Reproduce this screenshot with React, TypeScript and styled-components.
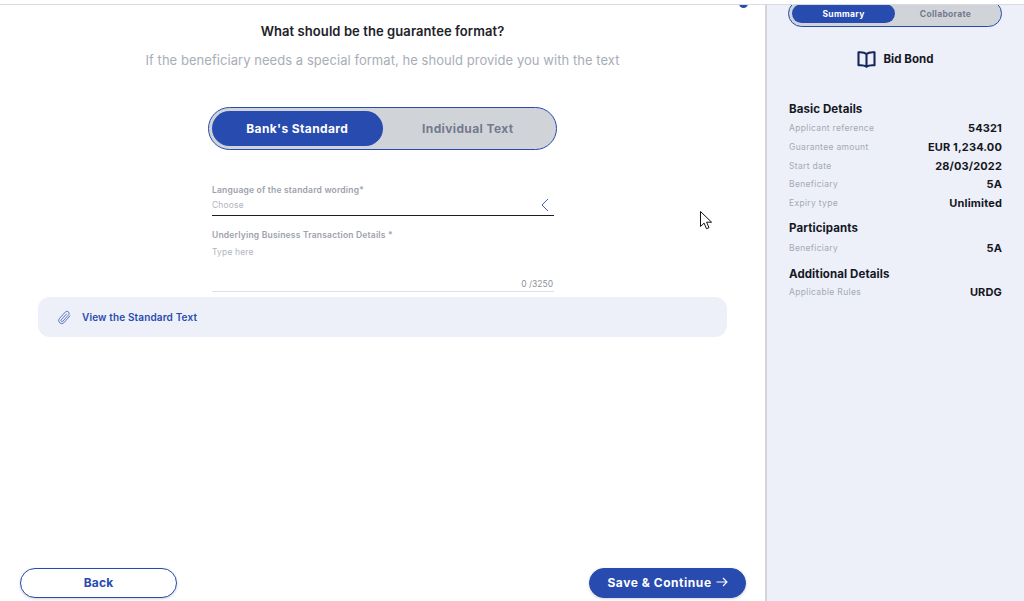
import React from "react";
import styled, { createGlobalStyle } from "styled-components";

const Global = createGlobalStyle`
  html, body { margin: 0; padding: 0; background: #fff; }
  #root { width: 1024px; height: 601px; overflow: hidden; }
  * { box-sizing: border-box; }
  body { font-family: "Inter", "Liberation Sans", sans-serif; }
`;

const Page = styled.div`
  position: relative;
  width: 1024px;
  height: 601px;
  display: flex;
  overflow: hidden;
  background: #fff;
`;

const TopBand = styled.div`
  position: absolute;
  left: 0;
  right: 0;
  top: 0;
  height: 5px;
  background: #fff;
  border-bottom: 1px solid #d9dadd;
  z-index: 3;
`;

const Main = styled.main`
  position: relative;
  width: 765px;
  flex: none;
  height: 601px;
  display: flex;
  flex-direction: column;
  align-items: center;
  padding: 23px 0 3px;
`;

const StepDot = styled.span`
  position: absolute;
  top: -1px;
  left: 739px;
  width: 9px;
  height: 9px;
  border-radius: 50%;
  border: 3px solid #274baf;
  background: #8fa3d8;
`;

const Title = styled.h1`
  margin: 0;
  width: 765px;
  text-align: center;
  font-size: 13px;
  line-height: 16px;
  letter-spacing: 0.08px;
  font-weight: 600;
  color: #1d2129;
`;

const Subtitle = styled.p`
  margin: 12px 0 0;
  font-size: 13px;
  line-height: 18px;
  letter-spacing: 0.05px;
  font-weight: 400;
  color: #a9adb8;
`;

const Switch = styled.div<{ $compact?: boolean }>`
  display: flex;
  align-items: center;
  flex: none;
  background: #d0d4d9;
  border: 1px solid #274baf;
  border-radius: 22px;
  padding: 3px;
  width: ${(p) => (p.$compact ? "214px" : "349px")};
  height: ${(p) => (p.$compact ? "27px" : "43px")};
  margin-top: ${(p) => (p.$compact ? "0" : "38px")};
  margin-left: ${(p) => (p.$compact ? "-1px" : "0")};
`;

const SwitchOption = styled.div<{ $on?: boolean; $compact?: boolean }>`
  height: 100%;
  display: flex;
  align-items: center;
  justify-content: center;
  border-radius: 18px;
  width: ${(p) => (p.$compact ? (p.$on ? "103px" : "101px") : "171px")};
  font-size: ${(p) => (p.$compact ? "8.5px" : "12px")};
  letter-spacing: ${(p) => (p.$compact ? "0.3px" : "0.38px")};
  font-weight: 700;
  background: ${(p) => (p.$on ? "#274baf" : "transparent")};
  color: ${(p) => (p.$on ? "#fff" : "#747a8c")};
`;

const Form = styled.div`
  width: 343px;
  margin-top: 34px;
  padding-left: 1px;
  display: flex;
  flex-direction: column;
`;

const FieldLabel = styled.label`
  font-size: 8.5px;
  line-height: 12px;
  letter-spacing: 0.2px;
  font-weight: 600;
  color: #9da1ac;
`;

const SelectRow = styled.div`
  display: flex;
  align-items: center;
  justify-content: space-between;
  height: 19px;
  padding: 0 5px 2px 0;
  border-bottom: 1px solid #1b1d22;
  margin-top: 1px;
  margin-bottom: 13px;
`;

const Placeholder = styled.span`
  font-size: 8.5px;
  line-height: 12px;
  letter-spacing: 0.15px;
  color: #b2b5bd;
`;

const TextArea = styled.div`
  display: flex;
  flex-direction: column;
  height: 51px;
  border-bottom: 1px solid #dfe1e4;
  padding-top: 5px;
`;

const Counter = styled.span`
  margin-top: auto;
  margin-bottom: 1px;
  padding-right: 1px;
  text-align: right;
  font-size: 8.5px;
  line-height: 12px;
  color: #8f939d;
`;

const AttachPanel = styled.div`
  align-self: flex-start;
  margin: 5px 0 0 38px;
  width: 689px;
  height: 40px;
  border-radius: 12px;
  background: #edf0f8;
  display: flex;
  align-items: center;
  gap: 10px;
  padding-left: 19px;
`;

const AttachLink = styled.a`
  font-size: 10px;
  letter-spacing: 0.14px;
  font-weight: 600;
  color: #274baf;
`;

const Footer = styled.div`
  margin-top: auto;
  width: 765px;
  display: flex;
  justify-content: space-between;
  padding: 0 19px 0 20px;
`;

const Button = styled.button<{ $primary?: boolean }>`
  width: 157px;
  height: 30px;
  border-radius: 15px;
  border: 1px solid #274baf;
  background: ${(p) => (p.$primary ? "#274baf" : "#fff")};
  color: ${(p) => (p.$primary ? "#fff" : "#274baf")};
  font-family: inherit;
  font-size: 12px;
  letter-spacing: ${(p) => (p.$primary ? "0.55px" : "0.2px")};
  font-weight: 700;
  display: flex;
  align-items: center;
  justify-content: center;
  gap: 4px;
  padding: 0 0 2px;
  box-shadow: 0 1px 3px rgba(0, 0, 0, 0.18);
`;

const Cursor = styled.svg`
  position: absolute;
  left: 699px;
  top: 210px;
`;

const Sidebar = styled.aside`
  flex: 1;
  height: 601px;
  background: #edf0f8;
  border-left: 2px solid #d4d5d8;
  padding: 0 22px 0 22px;
  display: flex;
  flex-direction: column;
  overflow: hidden;
`;

const SidebarSwitchWrap = styled.div`
  height: 27px;
  flex: none;
  display: flex;
  align-items: flex-end;
`;

const DocHeading = styled.div`
  display: flex;
  align-items: center;
  justify-content: center;
  gap: 7px;
  margin-top: 21px;
  height: 22px;
  font-size: 11.5px;
  letter-spacing: 0.05px;
  font-weight: 700;
  color: #14171f;
`;

const SectionTitle = styled.h2<{ $gap: number }>`
  margin: ${(p) => p.$gap}px 0 0;
  font-size: 11.5px;
  line-height: 16px;
  letter-spacing: 0.1px;
  font-weight: 700;
  color: #14171f;
`;

const Rows = styled.dl<{ $tight?: boolean }>`
  margin: ${(p) => (p.$tight ? "1px" : "2px")} 0 0;
  display: flex;
  flex-direction: column;
`;

const Row = styled.div`
  display: flex;
  align-items: center;
  justify-content: space-between;
  height: 18.7px;
`;

const RowLabel = styled.dt`
  font-size: 8.5px;
  letter-spacing: 0.33px;
  color: #a5a9b4;
`;

const RowValue = styled.dd`
  margin: 0;
  font-size: 11px;
  letter-spacing: 0.15px;
  font-weight: 700;
  color: #14171f;
`;

const basic = [
  ["Applicant reference", "54321"],
  ["Guarantee amount", "EUR 1,234.00"],
  ["Start date", "28/03/2022"],
  ["Beneficiary", "5A"],
  ["Expiry type", "Unlimited"],
];

export default function App() {
  return (
    <Page>
      <Global />
      <TopBand />
      <Main>
        <StepDot />
        <Title>What should be the guarantee format?</Title>
        <Subtitle>If the beneficiary needs a special format, he should provide you with the text</Subtitle>
        <Switch>
          <SwitchOption $on>Bank's Standard</SwitchOption>
          <SwitchOption>Individual Text</SwitchOption>
        </Switch>
        <Form>
          <FieldLabel>Language of the standard wording*</FieldLabel>
          <SelectRow>
            <Placeholder>Choose</Placeholder>
            <svg width="8" height="14" viewBox="0 0 8 14" fill="none">
              <path d="M7 1 1 7l6 6" stroke="#274baf" strokeWidth="0.9" />
            </svg>
          </SelectRow>
          <FieldLabel>Underlying Business Transaction Details *</FieldLabel>
          <TextArea>
            <Placeholder>Type here</Placeholder>
            <Counter>0 /3250</Counter>
          </TextArea>
        </Form>
        <AttachPanel>
          <svg width="15" height="15" viewBox="0 0 24 24" fill="none" stroke="#4a68bb" strokeWidth="1.4" strokeLinecap="round" strokeLinejoin="round">
            <path d="M20.500 9.500 11 20.500a5 5 0 0 1-7.500-6.500L13.500 3a3.500 3.500 0 0 1 5.300 4.500L9.300 18a1.700 1.700 0 0 1-2.600-2.200L15 6.500" />
          </svg>
          <AttachLink>View the Standard Text</AttachLink>
        </AttachPanel>
        <Footer>
          <Button>Back</Button>
          <Button $primary>
            Save &amp; Continue
            <svg width="12" height="10" viewBox="0 0 12 10" fill="none" stroke="#fff" strokeWidth="1.1">
              <path d="M0.500 5h10.500M7 1l4 4-4 4" />
            </svg>
          </Button>
        </Footer>
        <Cursor width="14" height="22" viewBox="0 0 14 22">
          <path d="M1.500 1.500v15l3.600-3.400 2.400 5.600 2.500-1-2.400-5.500h5z" fill="#fff" stroke="#111" strokeWidth="1" />
        </Cursor>
      </Main>
      <Sidebar>
        <SidebarSwitchWrap>
          <Switch $compact>
            <SwitchOption $on $compact>Summary</SwitchOption>
            <SwitchOption $compact>Collaborate</SwitchOption>
          </Switch>
        </SidebarSwitchWrap>
        <DocHeading>
          <svg width="19" height="19" viewBox="0 0 19 19" fill="none" stroke="#16265c" strokeWidth="2.100" strokeLinejoin="round">
            <path d="M9.500 4C8 2.700 5 2 1.500 2.300v13c3.500-.3 6.500.2 8 1.500 1.500-1.300 4.500-1.800 8-1.500v-13C14 2 11 2.700 9.500 4zM9.500 4v12.800" />
          </svg>
          Bid Bond
        </DocHeading>
        <SectionTitle $gap={31}>Basic Details</SectionTitle>
        <Rows>
          {basic.map(([k, v]) => (
            <Row key={k}>
              <RowLabel>{k}</RowLabel>
              <RowValue>{v}</RowValue>
            </Row>
          ))}
        </Rows>
        <SectionTitle $gap={8}>Participants</SectionTitle>
        <Rows>
          <Row>
            <RowLabel>Beneficiary</RowLabel>
            <RowValue>5A</RowValue>
          </Row>
        </Rows>
        <SectionTitle $gap={9}>Additional Details</SectionTitle>
        <Rows $tight>
          <Row>
            <RowLabel>Applicable Rules</RowLabel>
            <RowValue>URDG</RowValue>
          </Row>
        </Rows>
      </Sidebar>
    </Page>
  );
}
